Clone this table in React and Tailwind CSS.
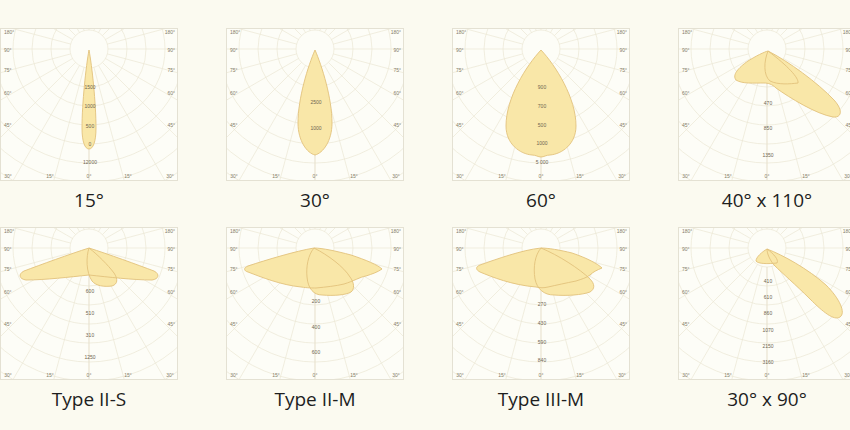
import React from 'react';

const O = { x: 89, y: 21 };
const radii = [19, 38, 57, 76, 95, 114, 133, 152, 171, 190];
const angles = Array.from({ length: 24 }, (_, i) => i * 15);

const sideLeft = ['180°', '90°', '75°', '60°', '45°'];
const sideRight = ['180°', '90°', '75°', '60°', '45°'];
const sideY = [5, 23, 43, 66, 98];
const bottom = [
  { x: 8, t: '30°' },
  { x: 50, t: '15°' },
  { x: 89, t: '0°' },
  { x: 128, t: '15°' },
  { x: 170, t: '30°' },
];

const diagrams = [
  {
    label: '15°',
    shapes: ['M89 22 C92 38 96 75 96 100 C96 114 93 121 89 121 C85 121 82 114 82 100 C82 75 86 38 89 22 Z'],
    values: [[60, '1500'], [79, '1000'], [99, '500'], [117, '0'], [135, '12000']],
  },
  {
    label: '30°',
    shapes: ['M89 22 C96 38 106 70 106 95 C106 113 97 125 89 127 C81 125 72 113 72 95 C72 70 82 38 89 22 Z'],
    values: [[75, '2500'], [101, '1000']],
  },
  {
    label: '60°',
    shapes: ['M89 22 C104 38 124 70 124 98 C124 116 110 126 98 127 C94 127 92 129 89 129 C86 129 84 127 80 127 C68 126 54 116 54 98 C54 70 74 38 89 22 Z'],
    values: [[60, '900'], [79, '700'], [98, '500'], [116, '1000'], [135, '5 000']],
  },
  {
    label: '40° x 110°',
    shapes: [
      'M90 23 C110 33 140 55 156 72 C166 83 163 90 155 89 C138 86 112 70 98 60 C94 56 90 55 86 55 C76 55 64 56 58 52 C54 47 60 40 70 33 C78 28 86 24 90 23 Z',
      'M90 23 C86 33 85 47 92 53 C100 57 112 56 120 55 C121 50 110 38 90 23 Z',
    ],
    values: [[76, '470'], [101, '850'], [128, '1350']],
  },
  {
    label: 'Type II-S',
    shapes: [
      'M89 21 C70 27 40 38 24 44 C18 47 19 52 26 53 C45 53 70 50 89 48 C108 50 133 53 152 53 C159 52 160 47 154 44 C138 38 108 27 89 21 Z',
      'M89 21 C86 30 86 45 92 54 C96 59 104 60 112 59 C118 57 118 52 114 46 C108 38 98 28 89 21 Z',
    ],
    values: [[65, '600'], [87, '510'], [109, '310'], [131, '1250']],
  },
  {
    label: 'Type II-M',
    shapes: [
      'M88 21 C70 24 40 33 22 39 C17 41 18 44 22 45 C35 50 55 58 75 60 C82 61 86 61 90 61 C100 60 110 59 118 57 C128 54 134 50 140 49 C146 47 152 45 156 42 C152 38 140 33 125 28 C110 24 96 21 88 21 Z',
      'M88 21 C82 28 80 40 81 50 C82 62 88 68 96 68 C108 69 120 68 125 65 C129 62 128 55 124 50 C118 40 102 28 88 21 Z',
    ],
    values: [[75, '200'], [101, '400'], [126, '600']],
  },
  {
    label: 'Type III-M',
    shapes: [
      'M89 21 C70 23 45 32 28 38 C23 40 24 43 28 45 C40 50 60 58 84 60 C88 61 92 61 96 60 C105 58 114 56 124 54 C130 52 134 51 138 48 C141 45 145 43 150 41 C146 37 135 31 120 26 C108 23 96 21 89 21 Z',
      'M89 21 C83 28 81 40 83 52 C85 62 92 68 102 68 C115 69 130 68 138 65 C143 62 143 57 138 52 C128 42 106 28 89 21 Z',
    ],
    values: [[78, '270'], [97, '430'], [116, '590'], [134, '840']],
  },
  {
    label: '30° x 90°',
    shapes: [
      'M89 22 C105 28 130 42 148 58 C162 72 168 86 162 90 C156 94 145 85 132 72 C118 58 104 46 96 38 C92 33 89 27 89 22 Z',
      'M89 22 C84 25 78 30 78 34 C80 37 90 37 99 36 C101 33 96 27 89 22 Z',
    ],
    values: [[55, '410'], [71, '610'], [87, '860'], [104, '1070'], [120, '2150'], [136, '3160']],
  },
];

function Polar({ d }) {
  return (
    <div className="w-[178px] h-[153px] border border-[#e4e1d3] bg-[#fdfdf7] overflow-hidden">
      <svg width="176" height="151" viewBox="1 1 176 151" className="block">
        {angles.map((a) => {
          const r = (a * Math.PI) / 180;
          return (
            <line
              key={a}
              x1={O.x + 19 * Math.sin(r)}
              y1={O.y + 19 * Math.cos(r)}
              x2={O.x + 260 * Math.sin(r)}
              y2={O.y + 260 * Math.cos(r)}
              stroke="#ebe6d4"
              strokeWidth="0.7"
            />
          );
        })}
        {radii.map((r) => (
          <circle key={r} cx={O.x} cy={O.y} r={r} fill="none" stroke="#ebe6d4" strokeWidth="0.7" />
        ))}
        <line x1={O.x} y1={O.y + 19} x2={O.x} y2={160} stroke="#e6e0cc" strokeWidth="0.7" />
        {d.shapes.map((p, i) => (
          <path key={'f' + i} d={p} fill="#f9e7a8" />
        ))}
        {d.shapes.map((p, i) => (
          <path key={'s' + i} d={p} fill="none" stroke="#e2c27c" strokeWidth="0.9" strokeLinejoin="round" />
        ))}
        <g fontFamily="Liberation Sans, sans-serif" fontSize="5" fill="#857d6a" dominantBaseline="middle">
          {sideY.map((y, i) => (
            <text key={'l' + i} x="4" y={y}>{sideLeft[i]}</text>
          ))}
          {sideY.map((y, i) => (
            <text key={'r' + i} x="175" y={y} textAnchor="end">{sideRight[i]}</text>
          ))}
          {bottom.map((b, i) => (
            <text key={'b' + i} x={b.x} y="149" textAnchor="middle">{b.t}</text>
          ))}
          {d.values.map(([y, t], i) => (
            <text key={'v' + i} x={O.x + 1} y={y} textAnchor="middle" fill="#6f6650">{t}</text>
          ))}
        </g>
      </svg>
    </div>
  );
}

export default function App() {
  return (
    <div className="w-[850px] h-[430px] overflow-hidden bg-[#fbfaf0] pt-[28px]">
      <div className="grid grid-cols-[repeat(4,178px)] gap-x-[48px] gap-y-[13px]">
        {diagrams.map((d) => (
          <div key={d.label} className="flex flex-col items-center">
            <Polar d={d} />
            <div
              className="mt-[5px] h-[28px] leading-[28px] text-[19px] text-[#1e1e1e]"
              style={{ fontFamily: '"Open Sans", "Noto Sans", sans-serif' }}
            >
              {d.label}
            </div>
          </div>
        ))}
      </div>
    </div>
  );
}
